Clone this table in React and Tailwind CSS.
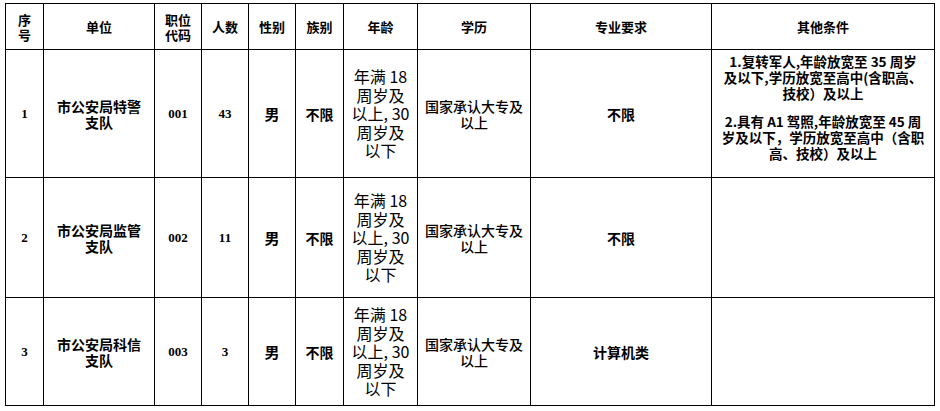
const rows = [
  { no: "1", unit: ["市公安局特警", "支队"], code: "001", count: "43", major: "不限", other: true, h: "h-[128px]" },
  { no: "2", unit: ["市公安局监管", "支队"], code: "002", count: "11", major: "不限", other: false, h: "h-[120px]" },
  { no: "3", unit: ["市公安局科信", "支队"], code: "003", count: "3", major: "计算机类", other: false, h: "h-[108px]" },
];

const cjk = { fontFamily: '"Noto Sans CJK SC", "Liberation Sans", sans-serif' };
const num = { fontFamily: '"Liberation Serif", "Noto Sans CJK SC", serif' };

const Lines = ({ lines }) => lines.map((l, i) => <div key={i}>{l}</div>);

const App = () => {
  return (
    <div className="w-[940px] h-[411px] bg-white pt-[3px] pl-[5px]" style={cjk}>
      <table className="table-fixed border-collapse text-black w-[929px]">
        <colgroup>
          <col className="w-[38px]" />
          <col className="w-[111px]" />
          <col className="w-[47px]" />
          <col className="w-[47px]" />
          <col className="w-[47px]" />
          <col className="w-[48px]" />
          <col className="w-[74px]" />
          <col className="w-[113px]" />
          <col className="w-[181px]" />
          <col className="w-[223px]" />
        </colgroup>
        <thead>
          <tr className="h-[46px] text-[13px] leading-[15px] font-bold">
            <th className="border border-black p-0 font-bold"><Lines lines={["序", "号"]} /></th>
            <th className="border border-black p-0 font-bold">单位</th>
            <th className="border border-black p-0 font-bold"><Lines lines={["职位", "代码"]} /></th>
            <th className="border border-black p-0 font-bold">人数</th>
            <th className="border border-black p-0 font-bold">性别</th>
            <th className="border border-black p-0 font-bold">族别</th>
            <th className="border border-black p-0 font-bold">年龄</th>
            <th className="border border-black p-0 font-bold">学历</th>
            <th className="border border-black p-0 font-bold">专业要求</th>
            <th className="border border-black p-0 font-bold">其他条件</th>
          </tr>
        </thead>
        <tbody>
          {rows.map((r) => (
            <tr key={r.no} className={`${r.h} text-center text-[14px] leading-[16px] font-semibold`}>
              <td className="border border-black p-0 text-[13px] font-bold" style={num}>{r.no}</td>
              <td className="border border-black p-0 text-[14px] leading-[16px]"><Lines lines={r.unit} /></td>
              <td className="border border-black p-0 text-[13px] font-bold" style={num}>{r.code}</td>
              <td className="border border-black p-0 text-[13px] font-bold" style={num}>{r.count}</td>
              <td className="border border-black p-0 text-[15px]">男</td>
              <td className="border border-black p-0 text-[14px]">不限</td>
              <td className="border border-black p-0 text-[16px] leading-[18.5px] font-normal">
                <Lines lines={["年满 18", "周岁及", "以上, 30", "周岁及", "以下"]} />
              </td>
              <td className="border border-black p-0 text-[14px] leading-[16px] font-medium">
                <Lines lines={["国家承认大专及", "以上"]} />
              </td>
              <td className="border border-black p-0 text-[14px]">{r.major}</td>
              <td className="border border-black p-0 align-top pt-[3px] text-[13.5px] leading-[16px]">
                {r.other && (
                  <div className="flex flex-col gap-[12px]">
                    <div>
                      <Lines lines={["1.复转军人,年龄放宽至 35 周岁", "及以下,学历放宽至高中(含职高、", "技校）及以上"]} />
                    </div>
                    <div>
                      <Lines lines={["2.具有 A1 驾照,年龄放宽至 45 周", "岁及以下，学历放宽至高中（含职", "高、技校）及以上"]} />
                    </div>
                  </div>
                )}
              </td>
            </tr>
          ))}
        </tbody>
      </table>
    </div>
  );
};

export default App;
